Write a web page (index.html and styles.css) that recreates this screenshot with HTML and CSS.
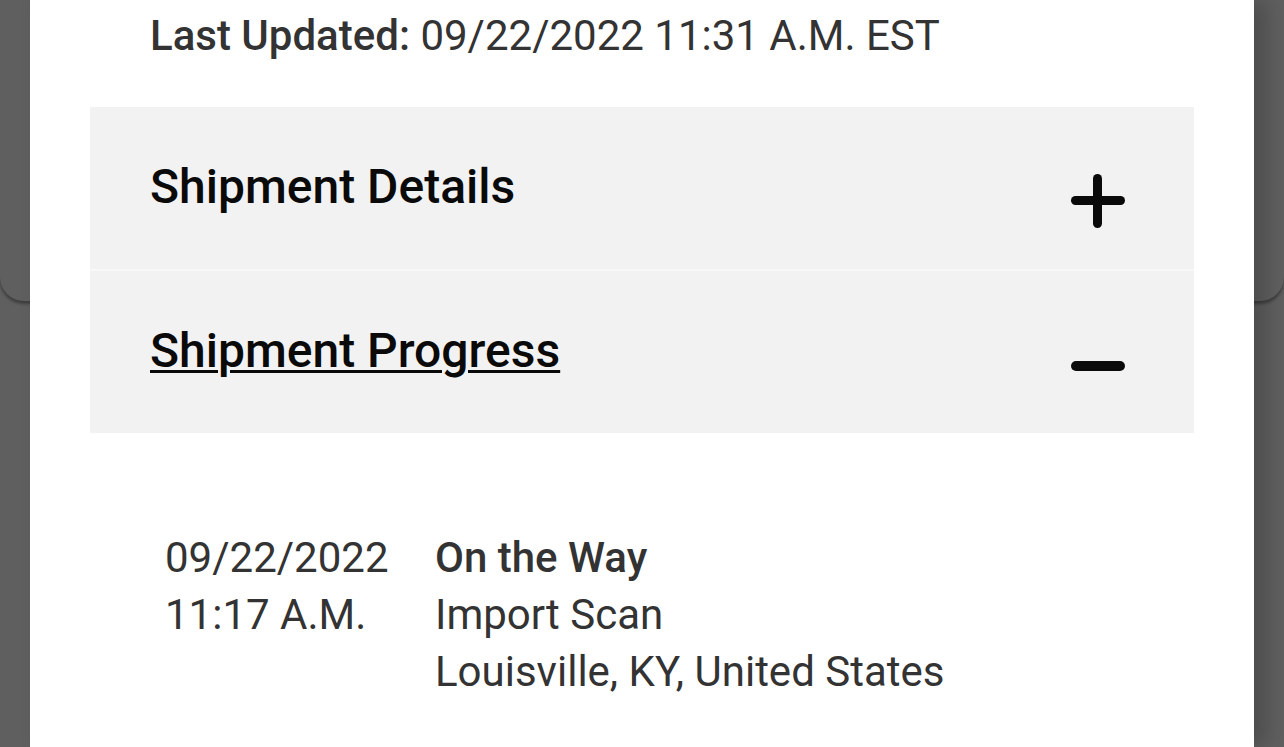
FILE: index.html
```html
<!DOCTYPE html>
<html lang="en">
<head>
  <meta charset="UTF-8">
  <meta name="viewport" content="width=device-width, initial-scale=1.0">
  <title>Shipment Tracking</title>
  <link rel="stylesheet" href="styles.css">
</head>
<body>
  <div class="backdrop-card"></div>

  <div class="sheet">
    <p class="last-updated"><strong>Last Updated:</strong> 09/22/2022 11:31 A.M. EST</p>

    <div class="accordion">
      <div class="accordion-header">
        <span class="accordion-title">Shipment Details</span>
        <span class="toggle plus"></span>
      </div>
      <div class="accordion-header open">
        <span class="accordion-title">Shipment Progress</span>
        <span class="toggle minus"></span>
      </div>
    </div>

    <div class="progress-list">
      <div class="progress-row">
        <div class="progress-date">
          <div>09/22/2022</div>
          <div>11:17 A.M.</div>
        </div>
        <div class="progress-info">
          <div class="progress-status">On the Way</div>
          <div>Import Scan</div>
          <div>Louisville, KY, United States</div>
        </div>
      </div>
    </div>
  </div>
</body>
</html>
```

FILE: styles.css
```css
/* Basic styles */
html,
body {
  height: 100%;
}
body {
  font-family: Roboto, "Noto Sans", Arial, sans-serif;
  margin: 0;
  padding: 0;
  background-color: #5f5f5f;
  overflow: hidden;
  position: relative;
}
.backdrop-card {
  position: absolute;
  top: 0;
  left: 0;
  right: 0;
  height: 301px;
  background-color: #5f5f5f;
  border-radius: 0 0 24px 24px;
  box-shadow: 0 3px 3px rgba(0, 0, 0, 0.35);
}
.sheet {
  position: relative;
  margin: 0 30px;
  height: 100%;
  background-color: #fff;
  padding: 0 60px;
  box-shadow: 12px 0 20px rgba(0, 0, 0, 0.2);
}
.last-updated {
  margin: 0;
  padding: 10px 0 0 60px;
  height: 107px;
  box-sizing: border-box;
  font-size: 42px;
  line-height: 52px;
  color: #333;
}
.last-updated strong {
  font-weight: 500;
}
.accordion {
  background-color: #f2f2f2;
}
.accordion-header {
  display: flex;
  justify-content: space-between;
  height: 162px;
  padding: 0 69px 0 60px;
  border-bottom: 2px solid #f8f8f8;
}
.accordion-header:last-child {
  border-bottom: none;
}
.accordion-title {
  font-size: 48px;
  font-weight: 500;
  color: #0a0a0a;
  line-height: 56px;
  margin-top: 52px;
}
.open .accordion-title {
  text-decoration: underline;
  text-decoration-thickness: 3px;
  text-underline-offset: 3px;
}
.toggle {
  position: relative;
  width: 54px;
  height: 54px;
  margin-top: 67px;
}
.toggle::before,
.toggle::after {
  content: "";
  position: absolute;
  background-color: #0a0a0a;
  border-radius: 5px;
}
.toggle::before {
  left: 0;
  right: 0;
  top: 22px;
  height: 9px;
}
.plus::after {
  top: 0;
  bottom: 0;
  left: 22px;
  width: 9px;
}
.minus::after {
  display: none;
}
.minus::before {
  top: 23px;
  height: 10px;
}
.progress-list {
  padding: 96px 0 0 75px;
}
.progress-row {
  display: flex;
  font-size: 42px;
  line-height: 57px;
  color: #333;
}
.progress-date {
  width: 270px;
}
.progress-status {
  font-weight: 500;
}
```
